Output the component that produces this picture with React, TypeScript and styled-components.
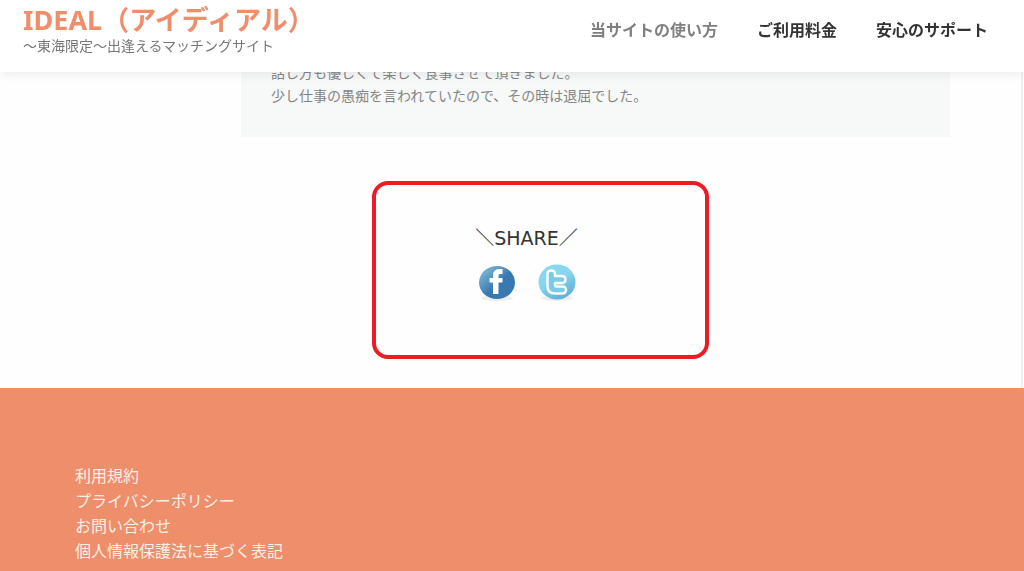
import React from "react";
import styled, { createGlobalStyle } from "styled-components";

const GlobalStyle = createGlobalStyle`
  * { box-sizing: border-box; }
  body {
    margin: 0;
    background: #fefefe;
    color: #777777;
    font-family: "Noto Sans", "Noto Sans CJK JP", sans-serif;
    font-size: 14px;
  }
  a { color: inherit; text-decoration: none; }
`;

const Header = styled.header`
  position: fixed;
  top: 0;
  left: 0;
  right: 0;
  z-index: 10;
  display: flex;
  justify-content: space-between;
  height: 72px;
  padding: 4px 36px 0 23px;
  background: #ffffff;
  box-shadow: 0 2px 10px rgba(0, 0, 0, 0.08);
`;

const SiteTitle = styled.a`
  display: block;
  color: #ef8e6b;
  font-size: 27px;
  font-weight: 700;
  line-height: 32px;
`;

const Tagline = styled.p`
  margin: 0;
  line-height: 20px;
`;

const Nav = styled.nav`
  display: flex;
  gap: 39px;
  padding-top: 14px;
`;

const NavLink = styled.a<{ $active?: boolean }>`
  color: ${(p) => (p.$active ? "#808080" : "#333333")};
  font-size: 16px;
  font-weight: 700;
  line-height: 24px;
  white-space: nowrap;
`;

const Main = styled.main`
  margin-right: 1px;
  padding: 0 71px 29px 241px;
  border-right: 2px solid #eeeeee;
`;

const Review = styled.article`
  padding: 61px 30px 30px;
  background: #f7f9f8;
  color: #858585;
  line-height: 23px;

  p { margin: 0; }
`;

const ShareBox = styled.section`
  display: flex;
  flex-direction: column;
  align-items: center;
  gap: 11px;
  max-width: 337px;
  margin: 44px 0 0 131px;
  padding: 38px 28px 51px 0;
  border: 4px solid #ed1c24;
  border-radius: 16px;
`;

const ShareTitle = styled.h2`
  margin: 0;
  color: #333333;
  font-family: "DejaVu Sans", "Noto Sans CJK JP", sans-serif;
  font-size: 19px;
  font-weight: 400;
  line-height: 30px;
`;

const ShareLinks = styled.div`
  display: flex;
  gap: 20px;

  a, svg { display: block; }
`;

const Footer = styled.footer`
  padding: 76px 75px 7px;
  background: #ee8e6b;
  color: #fdeee8;
  font-size: 16px;
  line-height: 25px;

  ul { margin: 0; padding: 0; list-style: none; }
`;

const navItems = ["当サイトの使い方", "ご利用料金", "安心のサポート"];
const footerItems = ["利用規約", "プライバシーポリシー", "お問い合わせ", "個人情報保護法に基づく表記"];

const FacebookIcon = () => (
  <svg width="40" height="40" viewBox="0 0 40 40" aria-hidden="true">
    <defs>
      <linearGradient id="fb" x1="0.1" y1="0.1" x2="0.65" y2="0.65">
        <stop offset="0.15" stopColor="#74acd0" />
        <stop offset="0.8" stopColor="#3779b0" />
      </linearGradient>
    </defs>
    <ellipse cx="20" cy="34" rx="16" ry="3" fill="#eeeeee" />
    <ellipse cx="20" cy="18.500" rx="18" ry="16.500" fill="url(#fb)" />
    <path d="M16 30V18.500H12.500V14H16V11.500Q16 5 22 5h3.500v5H23q-1.500 0-1.500 1.500V14h4v4.500h-4V30Z" fill="#fff" />
  </svg>
);

const TwitterIcon = () => (
  <svg width="40" height="40" viewBox="0 0 40 40" aria-hidden="true">
    <defs>
      <linearGradient id="tw" x1="0.3" y1="0.1" x2="0.75" y2="1">
        <stop offset="0.35" stopColor="#88d7ee" />
        <stop offset="1" stopColor="#58acd4" />
      </linearGradient>
    </defs>
    <ellipse cx="20" cy="34" rx="16" ry="3" fill="#eeeeee" />
    <ellipse cx="20" cy="18" rx="18.500" ry="17.500" fill="url(#tw)" />
    <path
      d="M14 6.500q4 0 4 3.500v2h6.500q4 0 4 3.500t-4 3.500H18v2q0 1.500 1.500 1.500h5.500q4 0 4 3.500t-4 3.500H18.500q-8 0-8-7.500V10q0-3.500 3.500-3.500Z"
      fill="#7bcbe8"
      stroke="#fff"
      strokeWidth="2.400"
      strokeLinejoin="round"
    />
  </svg>
);

export default function App() {
  return (
    <>
      <GlobalStyle />
      <Header>
        <div>
          <SiteTitle href="#">IDEAL（アイディアル）</SiteTitle>
          <Tagline>～東海限定～出逢えるマッチングサイト</Tagline>
        </div>
        <Nav>
          {navItems.map((item, i) => (
            <NavLink key={item} href="#" $active={i === 0}>{item}</NavLink>
          ))}
        </Nav>
      </Header>
      <Main>
        <Review>
          <p>話し方も優しくて楽しく食事させて頂きました。</p>
          <p>少し仕事の愚痴を言われていたので、その時は退屈でした。</p>
        </Review>
        <ShareBox>
          <ShareTitle>＼SHARE／</ShareTitle>
          <ShareLinks>
            <a href="#" aria-label="Facebook"><FacebookIcon /></a>
            <a href="#" aria-label="Twitter"><TwitterIcon /></a>
          </ShareLinks>
        </ShareBox>
      </Main>
      <Footer>
        <ul>
          {footerItems.map((item) => (
            <li key={item}><a href="#">{item}</a></li>
          ))}
        </ul>
      </Footer>
    </>
  );
}
